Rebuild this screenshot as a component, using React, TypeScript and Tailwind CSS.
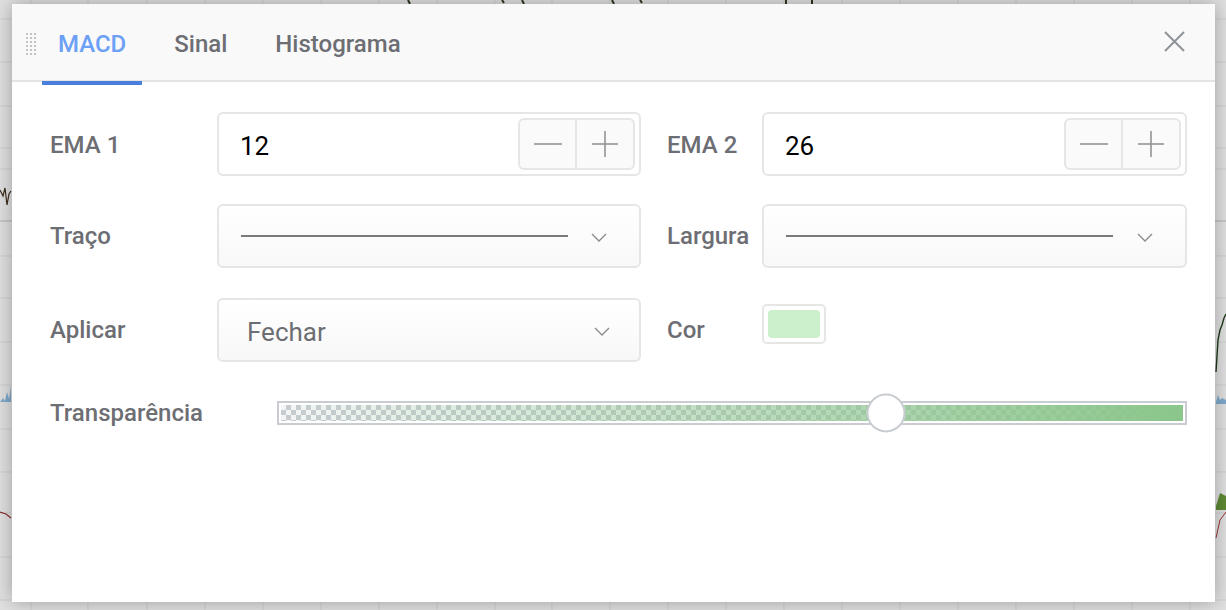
import { useState } from "react";

const gridX = [31, 88, 147, 205, 263, 321, 379, 437, 495, 552, 610, 668, 726, 784, 842, 900, 958, 1016, 1074, 1132, 1190];
const gridY = [19, 62, 106, 148, 169, 256, 298, 342, 385, 429, 472, 513, 557, 600];

const ChartBackdrop = () => (
  <svg className="absolute inset-0" width="1226" height="610">
    {gridX.map((x) => (
      <line key={`x${x}`} x1={x} y1={0} x2={x} y2={610} stroke="#cfcfcf" strokeWidth="1" />
    ))}
    {gridY.map((y) => (
      <line key={`y${y}`} x1={0} y1={y} x2={1226} y2={y} stroke="#cfcfcf" strokeWidth="1" />
    ))}
    <line x1={0} y1={221} x2={1226} y2={221} stroke="#a9adb2" strokeWidth="1" />
    <path d="M0 190 L3 196 L5 188 L7 205 L9 194 L11 191" stroke="#3b2a1a" strokeWidth="1.2" fill="none" />
    <path d="M0 402 L3 398 L5 401 L7 392 L9 399 L11 386 L11 402 Z" fill="#7fa9cc" />
    <path d="M0 512 L6 514 L11 518" stroke="#8a2f2f" strokeWidth="1.2" fill="none" />
    <path d="M1216 372 L1218 340 L1220 330 L1222 325 L1224 318 L1226 314" stroke="#1f3a1a" strokeWidth="1.4" fill="none" />
    <path d="M1216 402 L1218 395 L1220 400 L1222 398 L1226 400 L1226 404 L1216 404 Z" fill="#7fa9cc" />
    <path d="M1216 506 L1220 493 L1226 496 L1226 510 L1216 510 Z" fill="#5f8a35" />
    <path d="M1216 538 L1220 520 L1226 512" stroke="#9a3535" strokeWidth="1" fill="none" />
    <path d="M408 0 L410 4 M502 0 L504 3 M522 0 L524 4 M612 0 L614 4 M640 0 L642 3 M786 0 L786 4 M812 0 L812 4" stroke="#2c3a22" strokeWidth="2" />
  </svg>
);

const DragHandle = () => (
  <div className="grid grid-cols-3 gap-x-[2px] gap-y-[2px]">
    {Array.from({ length: 18 }).map((_, i) => (
      <span key={i} className="block h-[2px] w-[2px] bg-[#c4c4c4]" />
    ))}
  </div>
);

const Chevron = () => (
  <svg width="16" height="9" viewBox="0 0 16 9" fill="none">
    <path d="M1 1 L8 8 L15 1" stroke="#8a8a8a" strokeWidth="1.3" />
  </svg>
);

const NumberField = ({ value }: { value: number }) => (
  <div className="flex h-[64px] items-center justify-between rounded-[6px] border-2 border-[#e6e6e6] bg-white pl-[21px] pr-[4px]">
    <span className="pt-[4px] text-[26px] text-black">{value}</span>
    <div className="flex h-[52px] overflow-hidden rounded-[6px] border-2 border-[#e6e6e6] bg-[#fafafa]">
      <button className="flex w-[57px] items-center justify-center border-r-2 border-[#e6e6e6]">
        <svg width="28" height="2" viewBox="0 0 28 2">
          <line x1="0" y1="1" x2="28" y2="1" stroke="#8c8c8c" strokeWidth="1.5" />
        </svg>
      </button>
      <button className="flex w-[56px] items-center justify-center">
        <svg width="26" height="26" viewBox="0 0 26 26">
          <line x1="0" y1="13" x2="26" y2="13" stroke="#8c8c8c" strokeWidth="1.5" />
          <line x1="13" y1="0" x2="13" y2="26" stroke="#8c8c8c" strokeWidth="1.5" />
        </svg>
      </button>
    </div>
  </div>
);

const LineSelect = () => (
  <div className="flex h-[64px] items-center rounded-[6px] border-2 border-[#e6e6e6] bg-gradient-to-b from-white to-[#f8f8f8] pl-[22px] pr-[32px]">
    <span className="block h-[2px] w-[327px] bg-[#7a7a7a]" />
    <span className="ml-auto mt-[3px]">
      <Chevron />
    </span>
  </div>
);

const Label = ({ children }: { children: React.ReactNode }) => (
  <span className="text-[24px] font-medium text-[#6d6e73]">{children}</span>
);

const tabs = ["MACD", "Sinal", "Histograma"];

export default function App() {
  const [active, setActive] = useState(0);

  return (
    <div className="relative h-[610px] w-[1226px] overflow-hidden bg-[#e0e0e0] font-['Roboto',sans-serif]">
      <ChartBackdrop />
      <div className="absolute left-[12px] top-[4px] h-[598px] w-[1203px] bg-white shadow-[0_0_18px_rgba(0,0,0,0.3)]">
        <div className="flex h-[78px] items-stretch border-b-2 border-[#e4e4e4] bg-[#f9f9f9] pl-[14px] pr-[30px]">
          <div className="flex items-center pr-[6px] pt-[4px]">
            <DragHandle />
          </div>
          <div className="flex gap-[16px]">
            {tabs.map((t, i) => (
              <button
                key={t}
                onClick={() => setActive(i)}
                className={`relative flex items-center px-[16px] pt-[4px] text-[24px] font-medium ${
                  i === active ? "text-[#6ba0f6]" : "text-[#6d6e73]"
                }`}
              >
                {t}
                {i === active && <span className="absolute bottom-[-5px] left-0 right-0 h-[4px] bg-[#4a7fde]" />}
              </button>
            ))}
          </div>
          <button className="ml-auto flex items-center pb-[2px]">
            <svg width="21" height="21" viewBox="0 0 21 21">
              <path d="M1 1 L20 20 M20 1 L1 20" stroke="#8e9399" strokeWidth="2" />
            </svg>
          </button>
        </div>

        <div className="grid grid-cols-[167px_424px_26px_95px_425px] items-center gap-y-[28px] pl-[38px] pr-[28px] pt-[30px]">
          <span className="pt-[2px]">
            <Label>EMA 1</Label>
          </span>
          <NumberField value={12} />
          <span />
          <span className="pt-[2px]">
            <Label>EMA 2</Label>
          </span>
          <NumberField value={26} />

          <Label>Traço</Label>
          <LineSelect />
          <span />
          <Label>Largura</Label>
          <LineSelect />

          <span className="mt-[2px]">
            <Label>Aplicar</Label>
          </span>
          <div className="mt-[2px] flex h-[64px] items-center rounded-[6px] border-2 border-[#e6e6e6] bg-gradient-to-b from-white to-[#f8f8f8] pl-[28px] pr-[29px]">
            <span className="pt-[4px] text-[26px] text-[#6d6e73]">Fechar</span>
            <span className="ml-auto mt-[3px]">
              <Chevron />
            </span>
          </div>
          <span />
          <span className="mt-[2px]">
            <Label>Cor</Label>
          </span>
          <div className="mt-[2px] flex h-[64px] items-start pt-[6px]">
            <div className="rounded-[5px] border-2 border-[#e6e6e6] bg-white p-[4px]">
              <div className="h-[28px] w-[52px] rounded-[4px] bg-[#ccf0cc]" />
            </div>
          </div>
        </div>

        <div className="mt-[33px] flex items-center pl-[38px] pr-[28px]">
          <span className="w-[227px]">
            <Label>Transparência</Label>
          </span>
          <div className="relative flex-1 border-2 border-[#c9cdd1] bg-white p-[2px]">
            <div className="relative h-[16px] bg-[repeating-conic-gradient(#c6ccd1_0%_25%,#f3f5f5_0%_50%)] bg-[length:10px_10px]">
              <div className="absolute inset-0 bg-gradient-to-r from-[rgba(139,198,139,0)] to-[#8bc68b]" />
            </div>
            <div className="absolute left-[67%] top-1/2 h-[39px] w-[39px] -translate-x-1/2 -translate-y-1/2 rounded-full border-2 border-[#c9cdd1] bg-white" />
          </div>
        </div>
      </div>
    </div>
  );
}
